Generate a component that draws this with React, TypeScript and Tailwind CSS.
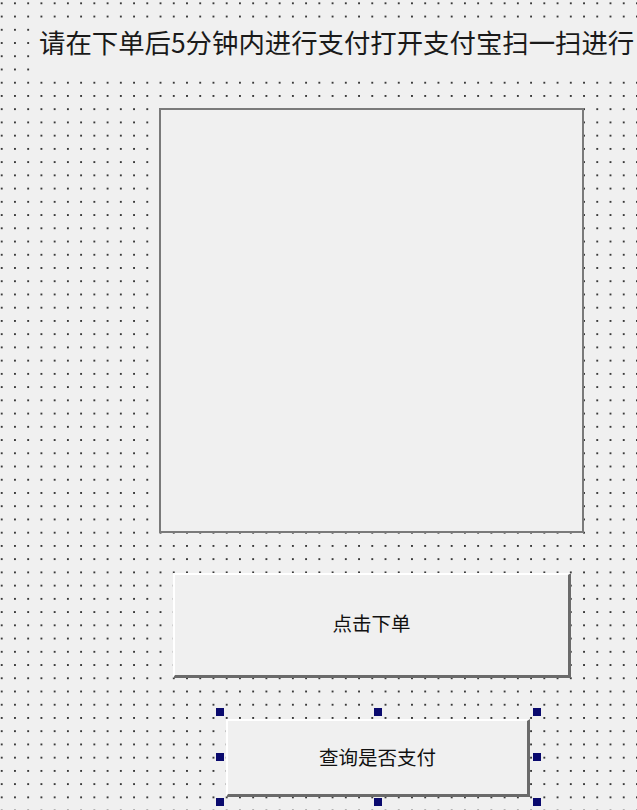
import React from "react";

const handles = [
  "left-[-10px] top-[-11px]",
  "left-[148px] top-[-11px]",
  "left-[307px] top-[-11px]",
  "left-[-10px] top-[34px]",
  "left-[307px] top-[34px]",
  "left-[-10px] top-[79px]",
  "left-[148px] top-[79px]",
  "left-[307px] top-[79px]",
];

function ClassicButton({ label, className }: { label: string; className: string }) {
  return (
    <div
      className={`flex items-center justify-center bg-[#f0f0f0] border-t-2 border-l-2 border-r-[3px] border-b-[3px] border-t-white border-l-white border-r-[#6a6a6a] border-b-[#6a6a6a] text-[19.5px] leading-none text-[#111] ${className}`}
    >
      {label}
    </div>
  );
}

export default function App() {
  return (
    <div className="w-[637px] h-[810px] overflow-hidden flex flex-col items-start bg-[#f0f0f0] bg-[radial-gradient(circle_at_center,#3a3a3a_0.8px,transparent_1.3px)] bg-[length:13.24px_13.24px] bg-[position:-4.92px_-3.32px] font-['Noto_Sans_CJK_SC',sans-serif]">
      {/* label */}
      <div className="mt-[22px] ml-[33px] w-[604px] h-[55px] bg-[#f0f0f0] pl-[6px] pt-[7px] overflow-hidden whitespace-nowrap text-[26.4px] leading-[26px] text-[#1a1a1a]">
        请在下单后5分钟内进行支付打开支付宝扫一扫进行
      </div>

      {/* picture box */}
      <div className="mt-[31px] ml-[159px] w-[425px] h-[425px] bg-[#f0f0f0] border-2 border-[#7a7a7a]" />

      <ClassicButton label="点击下单" className="mt-[40px] ml-[173px] w-[398px] h-[105px] pb-[5px]" />

      {/* selected button */}
      <div className="relative mt-[41px] ml-[226px]">
        <ClassicButton label="查询是否支付" className="w-[304px] h-[78px] pb-[2px]" />
        {handles.map((pos, i) => (
          <div key={i} className={`absolute w-[8px] h-[8px] bg-[#0a0a6e] ${pos}`} />
        ))}
      </div>
    </div>
  );
}
